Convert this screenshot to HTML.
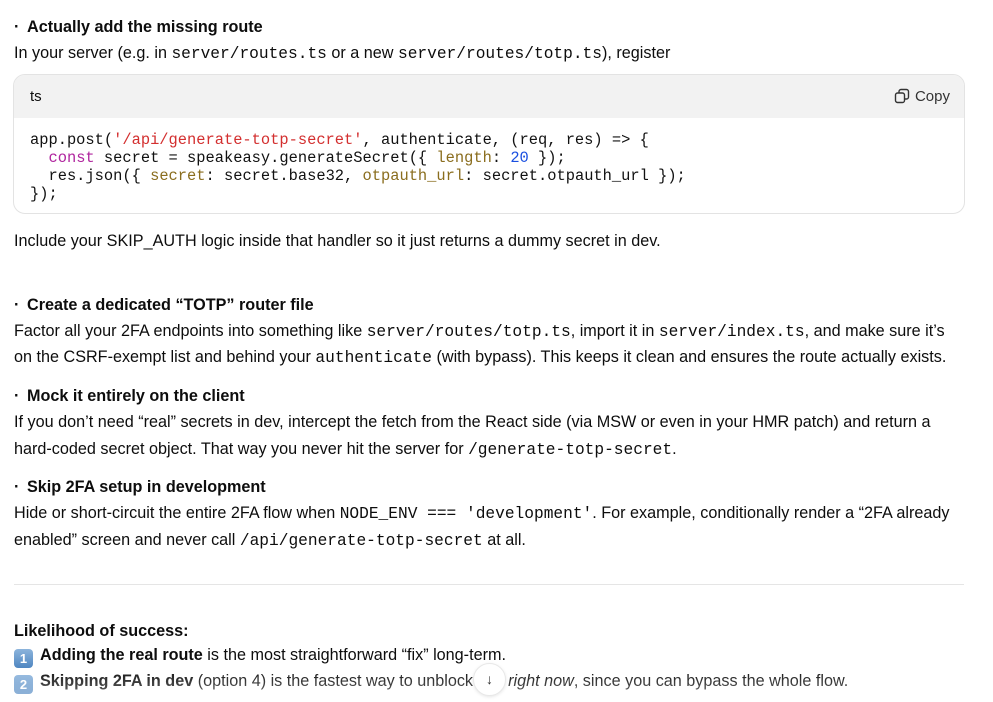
<!DOCTYPE html>
<html><head><meta charset="utf-8"><style>
body{margin:0;background:#fff;width:993px;height:702px;overflow:hidden;font-family:"Liberation Sans",sans-serif;font-size:16.2px;color:#0d0d0d;position:relative}
.t{position:absolute;left:14px;white-space:nowrap;line-height:20px}
b{font-weight:700}
.bl{display:inline-block;width:13px}
code{font-family:"Liberation Mono",monospace;font-size:16.2px}
.box{position:absolute;left:13px;top:74px;width:950px;height:138px;border:1px solid #e3e3e3;border-radius:12px;overflow:hidden}
.hd{height:43px;background:#f2f2f2;position:relative}
.hd span{position:absolute;top:13px;font-size:15px}
pre{margin:0;position:absolute;left:16px;top:56px;font-family:"Liberation Mono",monospace;font-size:15.4px;line-height:18px;color:#111}
.r{color:#d32f2f}.p{color:#b0259e}.y{color:#8a6d1e}.n{color:#1a4fe0}
.hr{position:absolute;left:14px;top:584px;width:950px;height:1px;background:#e5e5e5}
.k{display:inline-block;width:19px;height:19px;border-radius:4px;background:linear-gradient(#8cb4dc,#4f86c1);color:#fff;font-size:13px;font-weight:700;text-align:center;line-height:19px;vertical-align:-3px;margin-right:7px}
.fade{position:absolute;left:0;top:668px;width:993px;height:34px;background:linear-gradient(rgba(255,255,255,0),rgba(255,255,255,.45))}
.dn{position:absolute;left:473px;top:663px;width:31px;height:31px;border-radius:50%;background:#fff;border:1px solid #e8e8e8;box-shadow:0 1px 3px rgba(0,0,0,.1);text-align:center;line-height:30px;font-size:14px;color:#333}
</style></head><body>
<div class="t" style="top:17px"><b><span class="bl">·</span>Actually add the missing route</b></div>
<div class="t" style="top:43px">In your server (e.g. in <code>server/routes.ts</code> or a new <code>server/routes/totp.ts</code>), register</div>
<div class="box"><div class="hd"><span style="left:16px">ts</span>
<span style="right:14px;color:#333"><svg width="16" height="16" viewBox="0 0 16 16" style="vertical-align:-3px;margin-right:5px" fill="none" stroke="#333" stroke-width="1.4"><rect x="1.5" y="5" width="9" height="9.5" rx="2"/><path d="M5 5V3.5a2 2 0 0 1 2-2h5.5a2 2 0 0 1 2 2V9a2 2 0 0 1-2 2H10.5"/></svg>Copy</span></div>
<pre>app.post(<span class="r">'/api/generate-totp-secret'</span>, authenticate, (req, res) =&gt; {
  <span class="p">const</span> secret = speakeasy.generateSecret({ <span class="y">length</span>: <span class="n">20</span> });
  res.json({ <span class="y">secret</span>: secret.base32, <span class="y">otpauth_url</span>: secret.otpauth_url });
});</pre></div>
<div class="t" style="top:231px">Include your SKIP_AUTH logic inside that handler so it just returns a dummy secret in dev.</div>
<div class="t" style="top:295px"><b><span class="bl">·</span>Create a dedicated “TOTP” router file</b></div>
<div class="t" style="top:321px">Factor all your 2FA endpoints into something like <code>server/routes/totp.ts</code>, import it in <code>server/index.ts</code>, and make sure it’s</div>
<div class="t" style="top:347px">on the CSRF-exempt list and behind your <code>authenticate</code> (with bypass). This keeps it clean and ensures the route actually exists.</div>
<div class="t" style="top:386px"><b><span class="bl">·</span>Mock it entirely on the client</b></div>
<div class="t" style="top:412px">If you don’t need “real” secrets in dev, intercept the fetch from the React side (via MSW or even in your HMR patch) and return a</div>
<div class="t" style="top:439px">hard-coded secret object. That way you never hit the server for <code>/generate-totp-secret</code>.</div>
<div class="t" style="top:477px"><b><span class="bl">·</span>Skip 2FA setup in development</b></div>
<div class="t" style="top:503px">Hide or short-circuit the entire 2FA flow when <code>NODE_ENV === 'development'</code>. For example, conditionally render a “2FA already</div>
<div class="t" style="top:530px">enabled” screen and never call <code>/api/generate-totp-secret</code> at all.</div>
<div class="hr"></div>
<div class="t" style="top:621px"><b>Likelihood of success:</b></div>
<div class="t" style="top:645px"><span class="k">1</span><b>Adding the real route</b> is the most straightforward “fix” long-term.</div>
<div class="t" style="top:671px"><span class="k">2</span><b>Skipping 2FA in dev</b> (option 4) is the fastest way to unblock you <i>right now</i>, since you can bypass the whole flow.</div>
<div class="fade"></div>
<div class="dn">↓</div>
</body></html>
